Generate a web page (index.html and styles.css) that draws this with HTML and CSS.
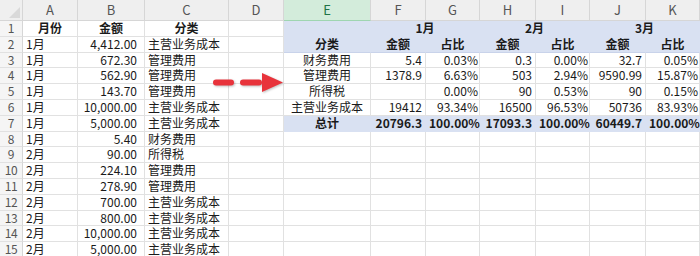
FILE: index.html
```html
<!DOCTYPE html>
<html lang="zh-CN">
<head>
<meta charset="utf-8">
<title>Sheet</title>
<link rel="stylesheet" href="styles.css">
</head>
<body>
<div class="sheet">
  <div class="grid">
    <div class="corner"><span class="tri"></span></div>
    <div class="ch">A</div><div class="ch">B</div><div class="ch">C</div><div class="ch">D</div>
    <div class="ch sel">E</div><div class="ch">F</div><div class="ch">G</div><div class="ch">H</div>
    <div class="ch">I</div><div class="ch">J</div><div class="ch">K</div>

    <div class="rh">1</div>
    <div class="c b ctr">月份</div><div class="c b ctr">金额</div><div class="c b ctr">分类</div><div class="c"></div>
    <div class="c bl"></div><div class="c bl b ctr span2">1月</div><div class="c bl b ctr span2">2月</div><div class="c bl b ctr span2 last">3月</div>

    <div class="rh">2</div>
    <div class="c">1月</div><div class="c r num">4,412.00</div><div class="c">主营业务成本</div><div class="c"></div>
    <div class="c bl b ctr hb">分类</div><div class="c bl b ctr hb">金额</div><div class="c bl b ctr hb">占比</div><div class="c bl b ctr hb">金额</div><div class="c bl b ctr hb">占比</div><div class="c bl b ctr hb">金额</div><div class="c bl b ctr hb last">占比</div>

    <div class="rh">3</div>
    <div class="c">1月</div><div class="c r num">672.30</div><div class="c">管理费用</div><div class="c"></div>
    <div class="c ctr">财务费用</div><div class="c r">5.4</div><div class="c r p">0.03%</div><div class="c r">0.3</div><div class="c r p">0.00%</div><div class="c r">32.7</div><div class="c r p">0.05%</div>

    <div class="rh">4</div>
    <div class="c">1月</div><div class="c r num">562.90</div><div class="c">管理费用</div><div class="c"></div>
    <div class="c ctr">管理费用</div><div class="c r">1378.9</div><div class="c r p">6.63%</div><div class="c r">503</div><div class="c r p">2.94%</div><div class="c r">9590.99</div><div class="c r p">15.87%</div>

    <div class="rh">5</div>
    <div class="c">1月</div><div class="c r num">143.70</div><div class="c">管理费用</div><div class="c"></div>
    <div class="c ctr">所得税</div><div class="c r"></div><div class="c r p">0.00%</div><div class="c r">90</div><div class="c r p">0.53%</div><div class="c r">90</div><div class="c r p">0.15%</div>

    <div class="rh">6</div>
    <div class="c">1月</div><div class="c r num">10,000.00</div><div class="c">主营业务成本</div><div class="c"></div>
    <div class="c ctr">主营业务成本</div><div class="c r">19412</div><div class="c r p">93.34%</div><div class="c r">16500</div><div class="c r p">96.53%</div><div class="c r">50736</div><div class="c r p">83.93%</div>

    <div class="rh">7</div>
    <div class="c">1月</div><div class="c r num">5,000.00</div><div class="c">主营业务成本</div><div class="c"></div>
    <div class="c bl b ctr">总计</div><div class="c bl b r">20796.3</div><div class="c bl b r p">100.00%</div><div class="c bl b r">17093.3</div><div class="c bl b r p">100.00%</div><div class="c bl b r">60449.7</div><div class="c bl b r p last">100.00%</div>

    <div class="rh">8</div>
    <div class="c">1月</div><div class="c r num">5.40</div><div class="c">财务费用</div><div class="c"></div>
    <div class="c"></div><div class="c"></div><div class="c"></div><div class="c"></div><div class="c"></div><div class="c"></div><div class="c"></div>

    <div class="rh">9</div>
    <div class="c">2月</div><div class="c r num">90.00</div><div class="c">所得税</div><div class="c"></div>
    <div class="c"></div><div class="c"></div><div class="c"></div><div class="c"></div><div class="c"></div><div class="c"></div><div class="c"></div>

    <div class="rh">10</div>
    <div class="c">2月</div><div class="c r num">224.10</div><div class="c">管理费用</div><div class="c"></div>
    <div class="c"></div><div class="c"></div><div class="c"></div><div class="c"></div><div class="c"></div><div class="c"></div><div class="c"></div>

    <div class="rh">11</div>
    <div class="c">2月</div><div class="c r num">278.90</div><div class="c">管理费用</div><div class="c"></div>
    <div class="c"></div><div class="c"></div><div class="c"></div><div class="c"></div><div class="c"></div><div class="c"></div><div class="c"></div>

    <div class="rh">12</div>
    <div class="c">2月</div><div class="c r num">700.00</div><div class="c">主营业务成本</div><div class="c"></div>
    <div class="c"></div><div class="c"></div><div class="c"></div><div class="c"></div><div class="c"></div><div class="c"></div><div class="c"></div>

    <div class="rh">13</div>
    <div class="c">2月</div><div class="c r num">800.00</div><div class="c">主营业务成本</div><div class="c"></div>
    <div class="c"></div><div class="c"></div><div class="c"></div><div class="c"></div><div class="c"></div><div class="c"></div><div class="c"></div>

    <div class="rh">14</div>
    <div class="c">2月</div><div class="c r num">10,000.00</div><div class="c">主营业务成本</div><div class="c"></div>
    <div class="c"></div><div class="c"></div><div class="c"></div><div class="c"></div><div class="c"></div><div class="c"></div><div class="c"></div>

    <div class="rh">15</div>
    <div class="c">2月</div><div class="c r num">5,000.00</div><div class="c">主营业务成本</div><div class="c"></div>
    <div class="c"></div><div class="c"></div><div class="c"></div><div class="c"></div><div class="c"></div><div class="c"></div><div class="c"></div>
  </div>

  <svg class="arrow" width="76" height="26" viewBox="210 70 76 26" aria-hidden="true">
    <g stroke="#e8333b" stroke-width="6" stroke-linecap="round" fill="none">
      <line x1="216" y1="82.5" x2="231" y2="82.5"/>
      <line x1="243" y1="82.5" x2="259" y2="82.5"/>
    </g>
    <polygon points="262,73 283,82.5 262,92" fill="#e8333b"/>
  </svg>
</div>
</body>
</html>
```

FILE: styles.css
```css
* { box-sizing: border-box; }
html, body { margin: 0; padding: 0; background: #fff; }
body {
  width: 700px;
  height: 256px;
  overflow: hidden;
  font-family: "Noto Sans CJK SC", "Noto Sans", sans-serif;
  font-size: 12px;
  color: #1a1a1a;
}
.sheet { position: relative; width: 700px; height: 256px; overflow: hidden; }
.grid {
  display: grid;
  grid-template-columns: 23px 55px 67px 84px 55px 87px 55px 54px 56px 54px 56px 54px;
  grid-template-rows: 21px repeat(15, 15.8px);
}
.corner {
  position: relative;
  background: #efefef;
  border-right: 1px solid #d6d6d6;
  border-bottom: 1px solid #d6d6d6;
}
.tri {
  position: absolute;
  right: 2px;
  bottom: 2px;
  width: 0;
  height: 0;
  border-left: 11px solid transparent;
  border-bottom: 11px solid #d9d9d9;
}
.ch {
  background: #efefef;
  border-right: 1px solid #d6d6d6;
  border-bottom: 1px solid #d6d6d6;
  color: #555;
  font-size: 13px;
  text-align: center;
  line-height: 20px;
}
.ch.sel {
  background: #d3ecdb;
  color: #217346;
  border-bottom: 1px solid #9fd5b1;
}
.rh {
  background: #f5f5f5;
  border-right: 1px solid #d6d6d6;
  border-bottom: 1px solid #e1e1e1;
  color: #555;
  font-size: 12px;
  text-align: center;
  line-height: 14.8px;
  white-space: nowrap;
  letter-spacing: -0.3px;
}
.c {
  border-right: 1px solid #e1e1e1;
  border-bottom: 1px solid #e1e1e1;
  line-height: 14.8px;
  padding: 0 2px 0 3px;
  white-space: nowrap;
  overflow: visible;
}
.r { text-align: right; padding-right: 3px; }
.num { padding-right: 7px; }
.p { padding-right: 1px; }
.ctr { text-align: center; padding: 0; }
.b { font-weight: 700; }
.span2 { grid-column: span 2; }
.bl {
  background: #d9e1f2;
  border-right-color: #d9e1f2;
  border-bottom-color: #d9e1f2;
}
.bl.hb { border-bottom-color: #c9d3ea; }
.bl.last { border-right-color: #d9e1f2; }
.arrow {
  position: absolute;
  left: 210px;
  top: 70px;
  filter: drop-shadow(1px 1px 1px rgba(0, 0, 0, 0.25));
}
```
